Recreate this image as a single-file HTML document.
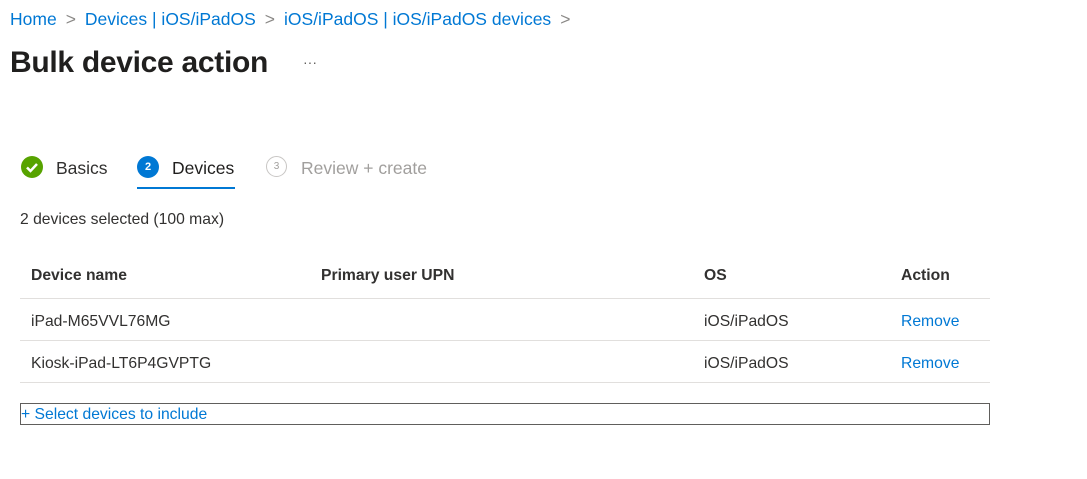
<!DOCTYPE html>
<html><head><meta charset="utf-8"><style>
body{margin:0;width:1087px;height:479px;background:#fff;font-family:"Liberation Sans",sans-serif;color:#323130;position:relative;overflow:hidden}
.a{position:absolute;white-space:nowrap}
.bc{top:9px;left:10px;font-size:17.5px;color:#0078d4}
.bc span.s{color:#8a8886;margin:0 9px}
h1{position:absolute;top:46px;left:10px;margin:0;font-size:30px;font-weight:bold;color:#201f1e;letter-spacing:-0.3px}
.dots{top:54px;left:303px;font-size:14px;color:#605e5c}
.step{top:158px;font-size:17.5px}
.circ{position:absolute;border-radius:50%;width:22px;height:22px;top:156px}
.line{position:absolute;border-bottom:1px solid #e1dfdd;left:20px;width:970px}
.link{color:#0078d4}
.t{font-size:15.7px}
</style></head><body>
<div class="a bc">Home<span class="s">&gt;</span>Devices | iOS/iPadOS<span class="s">&gt;</span>iOS/iPadOS | iOS/iPadOS devices<span class="s">&gt;</span></div>
<h1>Bulk device action</h1>
<div class="a dots">···</div>

<div class="circ" style="left:21px;background:#57a300"><svg width="22" height="22"><path d="M6 11.5l3.5 3.5 6.5-7" stroke="#fff" stroke-width="2.5" fill="none"/></svg></div>
<div class="a step" style="left:56px">Basics</div>
<div class="circ" style="left:137px;background:#0078d4;color:#fff;font-size:11px;font-weight:bold;text-align:center;line-height:22px">2</div>
<div class="a step" style="left:172px;color:#201f1e">Devices</div>
<div class="a" style="left:137px;top:187px;width:98px;height:2px;background:#0078d4"></div>
<div class="circ" style="left:266px;border:1.5px solid #c8c6c4;width:19px;height:19px;color:#a19f9d;font-size:10px;text-align:center;line-height:19px">3</div>
<div class="a step" style="left:301px;color:#a19f9d">Review + create</div>

<div class="a t" style="top:211px;left:20px">2 devices selected (100 max)</div>

<div class="a t" style="top:267px;left:31px;font-weight:bold">Device name</div>
<div class="a t" style="top:267px;left:321px;font-weight:bold">Primary user UPN</div>
<div class="a t" style="top:267px;left:704px;font-weight:bold">OS</div>
<div class="a t" style="top:267px;left:901px;font-weight:bold">Action</div>
<div class="line" style="top:298px"></div>
<div class="a t" style="top:313px;left:31px">iPad-M65VVL76MG</div>
<div class="a t" style="top:313px;left:704px">iOS/iPadOS</div>
<div class="a t link" style="top:313px;left:901px">Remove</div>
<div class="line" style="top:340px"></div>
<div class="a t" style="top:355px;left:31px">Kiosk-iPad-LT6P4GVPTG</div>
<div class="a t" style="top:355px;left:704px">iOS/iPadOS</div>
<div class="a t link" style="top:355px;left:901px">Remove</div>
<div class="line" style="top:382px"></div>

<div class="a" style="top:403px;left:20px;width:968px;height:20px;border:1px solid #605e5c"></div>
<div class="a t link" style="top:406px;left:21px">+ Select devices to include</div>
</body></html>
